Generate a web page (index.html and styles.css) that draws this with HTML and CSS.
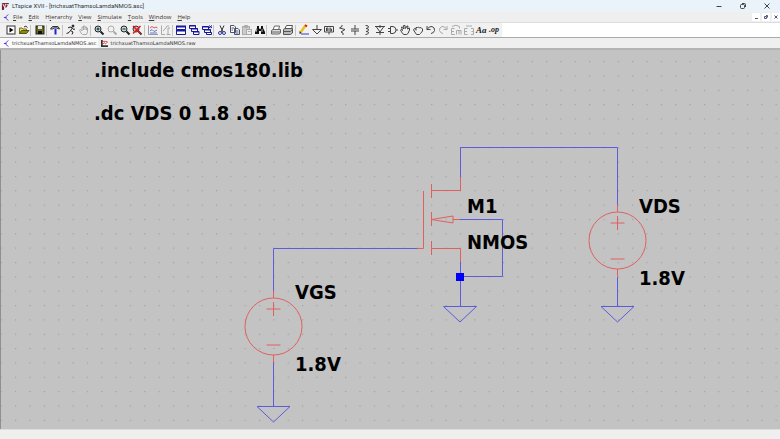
FILE: index.html
```html
<!DOCTYPE html>
<html lang="en">
<head>
<meta charset="utf-8">
<title>LTspice XVII</title>
<link rel="stylesheet" href="styles.css">
</head>
<body>
<header class="titlebar">
  <svg class="applogo" viewBox="0 0 10 10"><path d="M1 1H9L6 6H4L3 9H1Z" fill="#7d1f2b"/><path d="M2 2L4 6M5 2L4 7M6 3H8" stroke="#fff" fill="none"/></svg>
  <span class="caption">LTspice XVII - [trichxuatThamsoLamdaNMOS.asc]</span>
  <div class="winbuttons">
    <button aria-label="Minimize"><svg viewBox="0 0 8 8"><path d="M1.500 4.500H6.500"/></svg></button>
    <button aria-label="Restore"><svg viewBox="0 0 8 8"><rect x="1.500" y="2.500" width="4" height="4" rx="1"/><path d="M3 1.500H5.500Q6.500 1.500 6.500 2.500V5"/></svg></button>
    <button aria-label="Close"><svg viewBox="0 0 8 8"><path d="M1.500 1.500L6.500 6.500M6.500 1.500L1.500 6.500"/></svg></button>
  </div>
</header>
<nav class="menubar">
  <svg class="docicon" viewBox="0 0 8 8"><path d="M6 0.500L3.500 3V5L6 7.500M1 4H3.500"/></svg>
  <button><u>F</u>ile</button><button><u>E</u>dit</button><button>H<u>i</u>erarchy</button><button><u>V</u>iew</button><button><u>S</u>imulate</button><button><u>T</u>ools</button><button><u>W</u>indow</button><button><u>H</u>elp</button>
  <div class="docbuttons">
    <button aria-label="Minimize document"><svg viewBox="0 0 8 8"><path d="M3 5.500H6"/></svg></button>
    <button aria-label="Restore document"><svg viewBox="0 0 8 8"><path d="M2.500 3.500H4.500V5.500H2.500ZM4 2.500H5.500V4.500"/></svg></button>
    <button aria-label="Close document"><svg viewBox="0 0 8 8"><path d="M2.500 2.500L5.500 5.500M5.500 2.500L2.500 5.500"/></svg></button>
  </div>
</nav>
<div class="toolrow">
<div class="toolbar" role="toolbar">
  <button aria-label="Run"><svg viewBox="0 0 12 12"><rect x="2" y="2" width="8" height="8" fill="#fff" stroke="#333"/><path d="M4.500 3.500L8.500 6L4.500 8.500Z" fill="#000"/></svg></button>
  <button aria-label="Open"><svg viewBox="0 0 12 12"><path d="M1.500 9.500V4H4L5 5H8.500V6" fill="#e8dc50" stroke="#77721c"/><path d="M1.500 9.500L3.500 6.500H11L8.500 9.500Z" fill="#8b8722" stroke="#55520e"/><path d="M6 3Q8 1 9.500 3.500" stroke="#333" fill="none"/></svg></button>
  <i></i>
  <button aria-label="Save"><svg viewBox="0 0 12 12"><rect x="2" y="2" width="8" height="8" fill="#6a6b18" stroke="#222"/><rect x="4" y="2" width="4" height="3" fill="#e8e8e8"/><rect x="4" y="7" width="4" height="3" fill="#111"/></svg></button>
  <i></i>
  <button aria-label="Control panel"><svg viewBox="0 0 12 12"><path d="M1.500 5L3.500 2.500H9L10.500 5L7.500 4H5L3.500 5Z" fill="#a6adb8" stroke="#333"/><path d="M6.500 5V10.500" stroke="#2020e0" stroke-width="2"/></svg></button>
  <i></i>
  <button aria-label="Simulate"><svg viewBox="0 0 12 12" fill="none" stroke="#222"><circle cx="8" cy="2" r="1" fill="#222"/><path d="M3 4L5 3L7.500 4L5.500 6.500L8 8L7 10.500M5.500 6.500L4 8.500L1.500 9.500M7.500 4L8.500 5.500L10 5"/></svg></button>
  <button aria-label="Halt"><svg class="dim" viewBox="0 0 12 12"><path d="M3 9L1.500 6L2.500 5.500L4 7V3H5.500V2H7V3H8.500V4H9.500V8L8.500 10.500H4.500ZM5.500 3V6M7 3V6M8.500 4V6"/></svg></button>
  <i></i>
  <button aria-label="Zoom in"><svg viewBox="0 0 12 12" fill="none" stroke="#222"><circle cx="5" cy="5" r="3" fill="#b8dcdd"/><path d="M3.500 5H6.500M5 3.500V6.500"/><path d="M7.500 7.500L10.500 10.500" stroke="#222" stroke-width="2"/></svg></button>
  <button aria-label="Pan"><svg viewBox="0 0 12 12" fill="none" stroke="#aaa"><circle cx="5" cy="5" r="3"/><path d="M7.500 7.500L10.500 10.500" stroke-width="2"/></svg></button>
  <button aria-label="Zoom out"><svg viewBox="0 0 12 12" fill="none" stroke="#222"><circle cx="5" cy="5" r="3" fill="#b8dcdd"/><path d="M3.500 5H6.500"/><path d="M7.500 7.500L10.500 10.500" stroke-width="2"/></svg></button>
  <button aria-label="Zoom to fit"><svg viewBox="0 0 12 12" fill="none" stroke="#333"><circle cx="5" cy="5" r="3" fill="#dbb"/><path d="M7.500 7.500L10.500 10.500" stroke-width="2"/><path d="M2 2L9.500 9.500M9.500 2L2 9.500" stroke="#dc1c1c" stroke-width="1.500"/></svg></button>
  <i></i>
  <button aria-label="Autorange"><svg viewBox="0 0 12 12" fill="none" stroke="#99a"><path d="M1.500 1.500V10.500H11"/><path d="M3 4L5 2.500L7 4L9 3L10.500 4" stroke="#d55"/><path d="M3 7L5 5.500L7 7.500L10 6M3 9H10" stroke="#6674c8"/></svg></button>
  <button aria-label="Plot settings"><svg class="dim" viewBox="0 0 12 12"><path d="M1.500 1.500V10.500H5M3 7L5 5L7 2L9 2M8 4V10.500M6.500 10.500H10.500M8 4H10"/></svg></button>
  <i></i>
  <button aria-label="Tile"><svg viewBox="0 0 12 12" fill="#fff" stroke="#16169c"><path d="M1.500 2.500H10.500V5.500H1.500ZM1.500 6.500H10.500V10.500H1.500Z"/><path d="M1 2.500H11M1 6.500H11" stroke-width="2"/></svg></button>
  <button aria-label="Cascade"><svg viewBox="0 0 12 12" fill="#fff" stroke="#16169c"><path d="M1.500 1.500H7.500V4.500H1.500ZM3.500 4.500H9.500V7.500H3.500ZM5.500 7.500H11V10.500H5.500Z"/><path d="M1 2H8M3 5H10M5 8H11"/></svg></button>
  <button aria-label="Close all"><svg viewBox="0 0 12 12" fill="#fff" stroke="#16169c"><path d="M1.500 2.500H7.500V5.500H1.500ZM3.500 5.500H9.500V8.500H3.500ZM5.500 8.500H10.500V10.500H5.500Z"/><path d="M1 3H8M3 6H10M8 1.500L11 4M11 1.500L8 4"/></svg></button>
  <i></i>
  <button aria-label="Cut"><svg viewBox="0 0 12 12" fill="none" stroke="#333"><path d="M4 1.500L7 8M8 1.500L5 8"/><circle cx="4" cy="9" r="1.500" stroke="#2b3b9b"/><circle cx="8" cy="9" r="1.500" stroke="#2b3b9b"/></svg></button>
  <button aria-label="Copy"><svg viewBox="0 0 12 12" fill="#fff" stroke="#4a5270"><path d="M1.500 1.500H5L6.500 3V8.500H1.500ZM5.500 4.500H9L10.500 6V10.500H5.500Z"/><path d="M2.500 4H5M2.500 6H4M6.500 7H9.500M6.500 9H9.500"/></svg></button>
  <button aria-label="Paste"><svg class="dim" viewBox="0 0 12 12"><rect x="1.500" y="2.500" width="7" height="8" fill="#ccc"/><path d="M3.500 1.500H6.500V3.500H3.500Z"/><rect x="5.500" y="5.500" width="5" height="5" fill="#eee"/><path d="M7 7.500H9.500"/></svg></button>
  <button aria-label="Find"><svg viewBox="0 0 12 12" fill="#111"><path d="M3 2H5V4L5.500 5H6.500L7 4V2H9V4L11 8V10H7V7H5V10H1V8L3 4Z"/><path d="M3 5L2 8M8 5V8" stroke="#aaa"/></svg></button>
  <i></i>
  <button aria-label="Print"><svg viewBox="0 0 12 12" fill="#ddd" stroke="#666"><path d="M3 6L4.500 2H9.500L8.500 6Z" fill="#fff"/><path d="M1.500 6.500L3 5.500H10.500V9L9 10H1.500Z"/><path d="M2 8H10"/></svg></button>
  <button aria-label="Print preview"><svg viewBox="0 0 12 12" fill="#bbb" stroke="#555"><path d="M3 4.500L4.500 1.500H10.500L9.500 5Z" fill="#fff"/><path d="M1.500 5.500L3 4.500H10.500V9L8.500 10.500H1.500ZM2 7.500H8.500M8.500 7.500L10 6"/></svg></button>
  <i></i>
  <button aria-label="Wire"><svg viewBox="0 0 12 12"><path d="M2.500 8.500L7.500 1.500" stroke="#e8c21b" stroke-width="2.500"/><path d="M7 1L9 2.500" stroke="#d22" stroke-width="2"/><path d="M1.500 7L3.500 9L1.500 10Z" fill="#222"/><path d="M3 10H11" stroke="#3434e4"/></svg></button>
  <button aria-label="Ground"><svg class="dark" viewBox="0 0 12 12"><path d="M6 1V5.500M1.500 5.500H10.500L6 10Z"/></svg></button>
  <button aria-label="Label net"><svg class="dark" viewBox="0 0 12 12"><path d="M1.500 2.500H10.500V8H1.500ZM3.500 7V4H5V7M3.500 6H5M7 3.500V7H8.500V5H7M6 8V10.500"/></svg></button>
  <button aria-label="Resistor"><svg class="dark" viewBox="0 0 12 12"><path d="M6 1V2.500L3.500 4L9 5.500L5 8L7 9V11"/></svg></button>
  <button aria-label="Capacitor"><svg class="dark" viewBox="0 0 12 12"><path d="M6 1V5M2 5H10M2 7H10M6 7V11"/></svg></button>
  <button aria-label="Inductor"><svg class="dark" viewBox="0 0 12 12"><path d="M4.500 1.500Q8 1.500 7.500 3Q7 4.500 5 4.500Q8 4.500 7.500 6Q7 7.500 5 7.500Q8 7.500 7.500 9Q7 10.500 4.500 10.500"/></svg></button>
  <button aria-label="Diode"><svg class="dark" viewBox="0 0 12 12"><path d="M1 2.500H11M6 1V4M2.500 3L6 8L9.500 3M2 8.500H10M6 8V11"/></svg></button>
  <button aria-label="Component"><svg class="dark" viewBox="0 0 12 12"><path d="M3.500 2.500H6Q9 3 9 6Q9 9 6 9.500H3.500ZM1 4.500H3.500M1 7.500H3.500M9 6H11"/></svg></button>
  <button aria-label="Move"><svg class="dark" viewBox="0 0 12 12"><path d="M3.500 9.500L1.500 6L2.500 5.500L3.500 6.500L2.500 3H3.500L5 5L4.500 1.500H6L6.500 4.500L8 2H9L8.500 5L10.500 4V6L9 9.500L7.500 10.500H5Z"/></svg></button>
  <button aria-label="Drag"><svg class="dark" viewBox="0 0 12 12"><path d="M3.500 9L1.500 6L2.500 4.500L4 5V3.500H5.500L6.500 3L7.500 4L9 3.500L10.500 5V7L8.500 9.500L7.500 10.500H4.500ZM4 5V6.500"/></svg></button>
  <button aria-label="Undo"><svg class="dark" viewBox="0 0 12 12"><path d="M2 2V5.500H5.500M2 5.500Q4 2 7 2.500Q10 3.500 9.500 6.500Q9 9 6 9.500"/></svg></button>
  <button aria-label="Redo"><svg class="dim" viewBox="0 0 12 12"><path d="M10 2V5.500H6.500M10 5.500Q8 2 5 2.500Q2 3.500 2.500 6.500Q3 9 6 9.500"/></svg></button>
  <button aria-label="Rotate"><svg class="dim" viewBox="0 0 12 12"><path d="M2 2.500Q6 0 9.500 2.500V4.500M4.500 4.500H1.500V10.500H5M1.500 7.500H4M6.500 10.500V6.500H11V10.500M9 7V10.500"/></svg></button>
  <button aria-label="Mirror"><svg class="dim" viewBox="0 0 12 12"><path d="M3 2H9M4.500 4.500H1.500V10.500H4.500M1.500 7.500H4M8 4.500H10.500V10.500H8M8.500 7.500H10.500"/></svg></button>
  <button class="glyph" aria-label="Text">Aa</button>
  <button class="glyph small" aria-label="SPICE directive">.op</button>
</div>
</div>
<div class="tabs" role="tablist">
  <button class="tab active" role="tab"><svg class="docicon" viewBox="0 0 8 8"><path d="M6 0.500L3.500 3V5L6 7.500M1 4H3.500"/></svg>trichxuatThamsoLamdaNMOS.asc</button>
  <button class="tab" role="tab"><svg class="ploticon" viewBox="0 0 8 8"><rect width="8" height="8" fill="#fff"/><path d="M1 0V7H8" stroke="#333" stroke-width="2"/><path d="M2 4.500L4 3L5 4.500L8 2M2 1.500H7" stroke="#d22c2c"/></svg>trichxuatThamsoLamdaNMOS.raw</button>
</div>
<main class="sheet">
<svg class="schematic" viewBox="0 0 780 379" preserveAspectRatio="xMinYMin slice">
  <defs>
    <pattern id="grid" x="0.700" y="11" width="14.350" height="14.350" patternUnits="userSpaceOnUse"><rect width="1.200" height="1.200" fill="#a0a0a0"/></pattern>
    <g id="gnd"><path d="M-16.500 0H16.500L0 15.500Z"/></g>
    <g id="source"><path d="M0 -36V-28.500M0 28.500V36M-7 -17.500H7M0 -24.500V-10.500M-7 18.500H7"/><circle r="28.500"/></g>
  </defs>
  <rect width="780" height="379" fill="url(#grid)"/>
  <rect width="1" height="379" fill="#909090"/>
  <g class="wire">
    <path d="M460.500 127V97.500H617.500V157M617.500 227V256"/>
    <path d="M273.500 243V198.500H417M273.500 312V356"/>
    <path d="M460 169.500H502.500V226.500H460.500M460.500 212V256"/>
    <use href="#gnd" x="460" y="256.500"/><use href="#gnd" x="617.500" y="256.500"/><use href="#gnd" x="273.500" y="356.500"/>
  </g>
  <g class="part">
    <use href="#source" x="617.500" y="190.500"/><use href="#source" x="273.500" y="276.500"/>
    <path d="M417 198.500H423.500V141M431.500 134V148M431.500 162V176M431.500 191V205M431.500 140.500H460.500V127M431.500 198.500H460.500V212M431.500 169.500L453 166V173ZM453 169.500H460"/>
  </g>
  <rect x="456" y="223" width="8" height="8" fill="#0000fa"/>
  <g class="label">
    <text x="94" y="27">.include cmos180.lib</text>
    <text x="94" y="70">.dc VDS 0 1.8 .05</text>
    <text x="467" y="163">M1</text>
    <text x="467" y="199">NMOS</text>
    <text x="639" y="163">VDS</text>
    <text x="639" y="235">1.8V</text>
    <text x="295" y="249">VGS</text>
    <text x="295" y="321">1.8V</text>
  </g>
</svg>
</main>
<footer class="statusbar"></footer>
</body>
</html>
```
FILE: styles.css
```css
* { box-sizing: border-box; }
body {
  margin: 0;
  height: 100vh;
  display: flex;
  flex-direction: column;
  background: #efefef;
  color: #333;
  font: 6px/10px "Open Sans", "Noto Sans", sans-serif;
}
button {
  border: 0;
  padding: 0;
  margin: 0;
  background: none;
  color: inherit;
  font: inherit;
}
svg { display: block; }
.titlebar {
  display: flex;
  align-items: center;
  height: 12px;
  padding-left: 1px;
  background: #eaf3f9;
  flex: none;
}
.caption { font-family: Roboto, sans-serif; }
.applogo { width: 9px; height: 9px; margin-right: 2px; }
.winbuttons { margin-left: auto; display: flex; padding-right: 9px; gap: 16px; }
.winbuttons svg { width: 8px; height: 8px; fill: none; stroke: #444; }
.menubar { display: flex; align-items: center; height: 10px; gap: 6px; padding-left: 3px; flex: none; }
.docicon { width: 7px; height: 7px; fill: none; stroke: #2929e8; flex: none; }
.ploticon { width: 7px; height: 7px; fill: none; flex: none; }
.menubar .docicon { margin-right: -3px; }
.docbuttons { margin-left: auto; display: flex; gap: 2px; }
.docbuttons button { background: #fff; }
.docbuttons svg { width: 8px; height: 8px; fill: none; stroke: #557; }
.toolrow {
  height: 16px;
  flex: none;
  background: #fff;
  border-top: 1px solid #ddd;
  border-bottom: 1px solid #aaa;
}
.toolbar {
  display: flex;
  align-items: center;
  width: 502px;
  max-width: 100%;
  height: 14px;
  padding: 0 2px 0 5px;
  background: #f1f1f1;
}
.toolbar button { flex: 1 1 0; min-width: 0; display: flex; justify-content: center; }
.toolbar svg { width: 12px; height: 12px; flex: none; }
.toolbar i { flex: none; width: 3px; height: 11px; border-left: 1px solid #c4c4c4; }
.dim { fill: none; stroke: #aaa; }
.dark { fill: none; stroke: #444; }
.toolbar .glyph { font: italic bold 9px/12px "Liberation Serif", serif; color: #222; }
.toolbar .small { font-size: 8px; }
.tabs {
  display: flex;
  height: 12px;
  flex: none;
  border-bottom: 2px solid #b4b4b4;
}
.tab {
  display: flex;
  align-items: center;
  gap: 2px;
  padding: 0 2px 0 3px;
  font: 5px/10px "DejaVu Sans", sans-serif;
}
.tab.active { background: #fafafa; }
.sheet { flex: 1; min-height: 0; background: #c3c3c3; overflow: hidden; }
.schematic { width: 100%; height: 100%; }
.wire { fill: none; stroke: #5c5cdc; }
.part { fill: none; stroke: #e06060; }
.label { font: bold 20px "DejaVu Sans Condensed", "DejaVu Sans", sans-serif; fill: #000; }
.statusbar { height: 10px; flex: none; border-top: 1px solid #ddd; background: #efefef; }
```
